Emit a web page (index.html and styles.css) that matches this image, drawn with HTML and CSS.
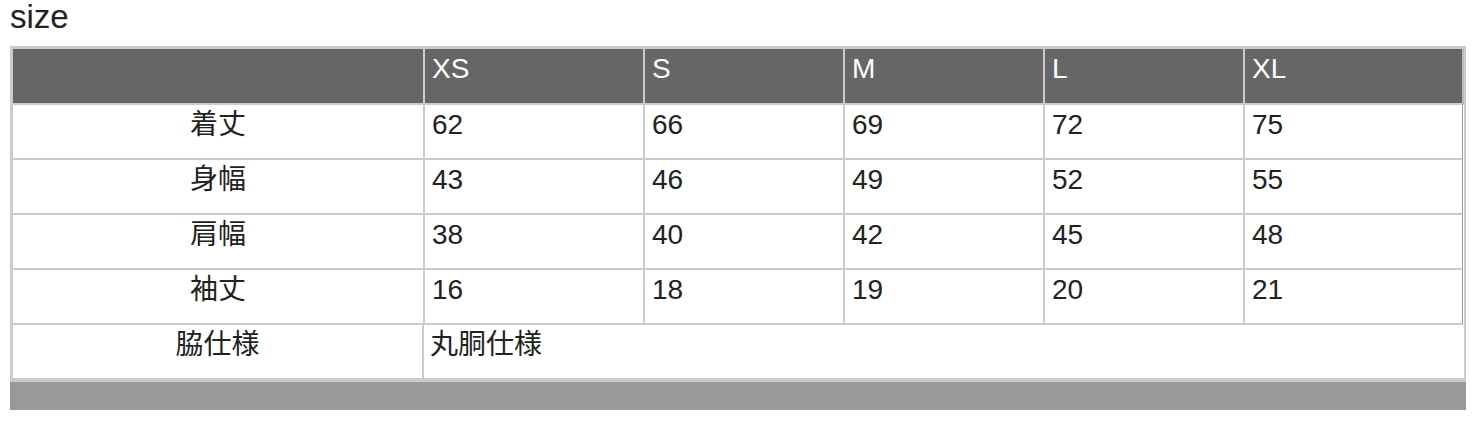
FILE: index.html
```html
<!DOCTYPE html>
<html lang="ja">
<head>
<meta charset="utf-8">
<title>size</title>
<link rel="stylesheet" href="styles.css">
</head>
<body>
<div class="page">
  <h2 class="title">size</h2>
  <div class="size-box">
    <table class="size-table">
      <colgroup>
        <col class="c-label"><col class="c-xs"><col class="c-mid"><col class="c-mid"><col class="c-mid"><col class="c-xl">
      </colgroup>
      <thead>
        <tr>
          <th></th><th>XS</th><th>S</th><th>M</th><th>L</th><th class="last">XL</th>
        </tr>
      </thead>
      <tbody>
        <tr><td class="label">着丈</td><td>62</td><td>66</td><td>69</td><td>72</td><td class="last">75</td></tr>
        <tr><td class="label">身幅</td><td>43</td><td>46</td><td>49</td><td>52</td><td class="last">55</td></tr>
        <tr><td class="label">肩幅</td><td>38</td><td>40</td><td>42</td><td>45</td><td class="last">48</td></tr>
        <tr><td class="label">袖丈</td><td>16</td><td>18</td><td>19</td><td>20</td><td class="last">21</td></tr>
      </tbody>
    </table>
    <table class="spec-table">
      <colgroup><col class="s-label"><col class="s-value"></colgroup>
      <tbody>
        <tr><td class="label">脇仕様</td><td class="value">丸胴仕様</td></tr>
      </tbody>
    </table>
  </div>
  <div class="size-foot"></div>
</div>
</body>
</html>
```

FILE: styles.css
```css
html, body {
  margin: 0;
  padding: 0;
  background: #fff;
}

body {
  font-family: "Liberation Sans", "Noto Sans CJK JP", sans-serif;
  color: #222;
}

.page {
  padding: 0 18px 0 10px;
}

.title {
  margin: 0 0 12px 0;
  font-size: 33px;
  line-height: 34px;
  font-weight: normal;
  color: #222;
}

.size-box {
  border: 2px solid #ccc;
  border-top-width: 3px;
  border-left-width: 3px;
}

.size-table,
.spec-table {
  border-collapse: separate;
  border-spacing: 0;
  table-layout: fixed;
}

.size-table { width: 1450px; }
.spec-table { width: 1451px; }

.c-label { width: 412px; }
.c-xs { width: 220px; }
.c-mid { width: 200px; }
.c-xl { width: 218px; }

.s-label { width: 411px; }
.s-value { width: 1040px; }

.size-table th,
.size-table td,
.spec-table td {
  box-sizing: border-box;
  height: 55px;
  padding: 4px 6px 0 7px;
  vertical-align: top;
  text-align: left;
  font-size: 28px;
  line-height: 32px;
  font-weight: normal;
  border-right: 2px solid #ccc;
  border-bottom: 2px solid #ccc;
  color: #222;
}

.size-table th {
  height: 56px;
  background: #666;
  color: #fff;
}

.size-table .label,
.spec-table .label {
  text-align: center;
  padding-left: 6px;
}

.spec-table td.value {
  padding-left: 6px;
  border-right: 0;
}

.size-table td.last {
  border-right: 1px solid #999;
  box-shadow: 1px 0 0 #fff;
}

.size-table th.last {
  border-right: 1px solid #bbb;
  box-shadow: 1px 0 0 #bbb;
}

.size-foot {
  height: 28px;
  background: #999;
}
```
